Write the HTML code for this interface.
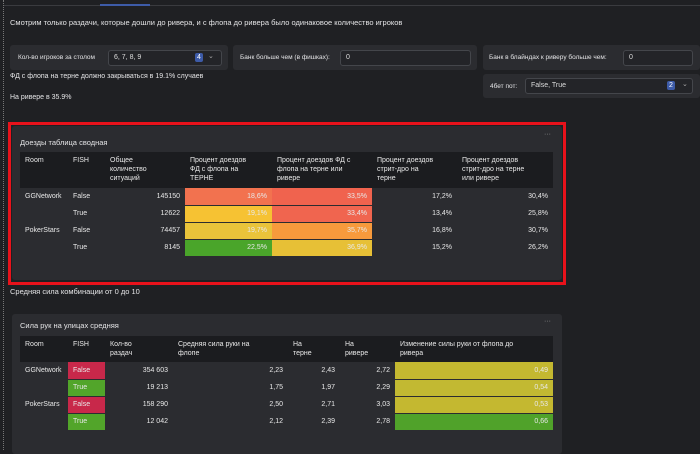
<!DOCTYPE html>
<html><head><meta charset="utf-8"><style>
*{box-sizing:border-box;margin:0;padding:0}
body{width:700px;height:450px;background:#1f2023;font-family:"Liberation Sans","Noto Sans CJK SC",sans-serif;color:#e4e4e6;position:relative;overflow:hidden;font-size:7px}
.a{position:absolute}
.box{position:absolute;background:#2b2c30;border-radius:3px}
.inp{position:absolute;border:1px solid #44464b;border-radius:3px;background:#232428;font-size:7px;padding:3px 5px;color:#ddd}
.badge{position:absolute;background:#3d5ba8;color:#fff;font-size:7px;padding:1px 2px;border-radius:2px}
.panel{position:absolute;background:#2b2c30;border-radius:3px}
table{position:absolute;border-collapse:collapse;font-size:7px;table-layout:fixed}
th{background:#1b1c1f;text-align:left;vertical-align:top;font-weight:normal;padding:4px 5px;line-height:9px;color:#e8e8e8}
td{padding:0 5px;border-bottom:1px solid #2b2c30;color:#e8e8e8;white-space:nowrap}
td.r{text-align:right}
tr.b td{height:17px}
</style></head><body>
<div class="a" style="left:3px;top:0;width:0;height:450px;border-left:1px dotted #777"></div>
<div class="a" style="left:4px;top:5px;width:696px;height:1px;background:#3a3b3f"></div>
<div class="a" style="left:100px;top:4px;width:50px;height:2px;background:#3d5ba8"></div>
<div class="a" style="left:10px;top:18px;font-size:7.5px">Смотрим только раздачи, которые дошли до ривера, и с флопа до ривера было одинаковое количество игроков</div>

<div class="box" style="left:10px;top:45px;width:218px;height:25px"></div>
<div class="a" style="left:18px;top:54px;font-size:6.5px">Кол-во игроков за столом</div>
<div class="inp" style="left:108px;top:50px;width:114px;height:16px">6, 7, 8, 9</div>
<div class="badge" style="left:195px;top:53px">4</div>
<div class="a" style="left:208px;top:52px;font-size:7px;color:#aaa">⌄</div>

<div class="box" style="left:233px;top:45px;width:244px;height:25px"></div>
<div class="a" style="left:240px;top:54px;font-size:6.5px">Банк больше чем (в фишках):</div>
<div class="inp" style="left:340px;top:50px;width:131px;height:16px">0</div>

<div class="box" style="left:483px;top:45px;width:217px;height:25px"></div>
<div class="a" style="left:489px;top:54px;font-size:6.5px">Банк в блайндах к риверу больше чем:</div>
<div class="inp" style="left:623px;top:50px;width:70px;height:16px">0</div>

<div class="box" style="left:483px;top:74px;width:217px;height:24px"></div>
<div class="a" style="left:490px;top:83px;font-size:6.5px">4бет пот:</div>
<div class="inp" style="left:525px;top:78px;width:168px;height:16px">False, True</div>
<div class="badge" style="left:667px;top:81px">2</div>
<div class="a" style="left:682px;top:80px;font-size:7px;color:#aaa">⌄</div>

<div class="a" style="left:10px;top:73px;font-size:7px">ФД с флопа на терне должно закрываться в 19.1% случаев</div>
<div class="a" style="left:10px;top:94px;font-size:7px">На ривере в 35.9%</div>

<div class="panel" style="left:12px;top:126px;width:550px;height:154px"></div>
<div class="a" style="left:8px;top:122px;width:558px;height:163px;border:3px solid #e8121b"></div>
<div class="a" style="left:20px;top:138px;font-size:7.5px">Доезды таблица сводная</div>
<div class="a" style="left:544px;top:131px;font-size:7px;color:#999">···</div>
<table style="left:20px;top:152px;width:533px">
<colgroup><col style="width:48px"><col style="width:37px"><col style="width:80px"><col style="width:87px"><col style="width:100px"><col style="width:85px"><col style="width:96px"></colgroup>
<tr><th style="height:36px">Room</th><th>FISH</th><th>Общее<br>количество<br>ситуаций</th><th>Процент доездов<br>ФД с флопа на<br>ТЕРНЕ</th><th>Процент доездов ФД с<br>флопа на терне или<br>ривере</th><th>Процент доездов<br>стрит-дро на<br>терне</th><th>Процент доездов<br>стрит-дро на терне<br>или ривере</th></tr>
<tr class="b"><td>GGNetwork</td><td>False</td><td class="r">145150</td><td class="r" style="background:#f2724f">18,6%</td><td class="r" style="background:#f0634e">33,5%</td><td class="r">17,2%</td><td class="r">30,4%</td></tr>
<tr class="b"><td></td><td>True</td><td class="r">12622</td><td class="r" style="background:#f6c233">19,1%</td><td class="r" style="background:#f0654f">33,4%</td><td class="r">13,4%</td><td class="r">25,8%</td></tr>
<tr class="b"><td>PokerStars</td><td>False</td><td class="r">74457</td><td class="r" style="background:#e9c33a">19,7%</td><td class="r" style="background:#f79a3c">35,7%</td><td class="r">16,8%</td><td class="r">30,7%</td></tr>
<tr class="b"><td></td><td>True</td><td class="r">8145</td><td class="r" style="background:#4aa52a">22,5%</td><td class="r" style="background:#e7c036">36,9%</td><td class="r">15,2%</td><td class="r">26,2%</td></tr>
</table>

<div class="a" style="left:10px;top:287px;font-size:7.5px">Средняя сила комбинации от 0 до 10</div>
<div class="panel" style="left:12px;top:314px;width:550px;height:140px"></div>
<div class="a" style="left:20px;top:321px;font-size:7.5px">Сила рук на улицах средняя</div>
<div class="a" style="left:544px;top:318px;font-size:7px;color:#999">···</div>
<table style="left:20px;top:336px;width:533px">
<colgroup><col style="width:48px"><col style="width:37px"><col style="width:68px"><col style="width:115px"><col style="width:52px"><col style="width:55px"><col style="width:158px"></colgroup>
<tr><th style="height:26px">Room</th><th>FISH</th><th>Кол-во<br>раздач</th><th>Средняя сила руки на<br>флопе</th><th>На<br>терне</th><th>На<br>ривере</th><th>Изменение силы руки от флопа до<br>ривера</th></tr>
<tr class="b"><td>GGNetwork</td><td style="background:#c8284a">False</td><td class="r">354 603</td><td class="r">2,23</td><td class="r">2,43</td><td class="r">2,72</td><td class="r" style="background:#c4b830">0,49</td></tr>
<tr class="b"><td></td><td style="background:#52a52a">True</td><td class="r">19 213</td><td class="r">1,75</td><td class="r">1,97</td><td class="r">2,29</td><td class="r" style="background:#c2b932">0,54</td></tr>
<tr class="b"><td>PokerStars</td><td style="background:#c8284a">False</td><td class="r">158 290</td><td class="r">2,50</td><td class="r">2,71</td><td class="r">3,03</td><td class="r" style="background:#c4b830">0,53</td></tr>
<tr class="b"><td></td><td style="background:#52a52a">True</td><td class="r">12 042</td><td class="r">2,12</td><td class="r">2,39</td><td class="r">2,78</td><td class="r" style="background:#50a22a">0,66</td></tr>
</table>
</body></html>
